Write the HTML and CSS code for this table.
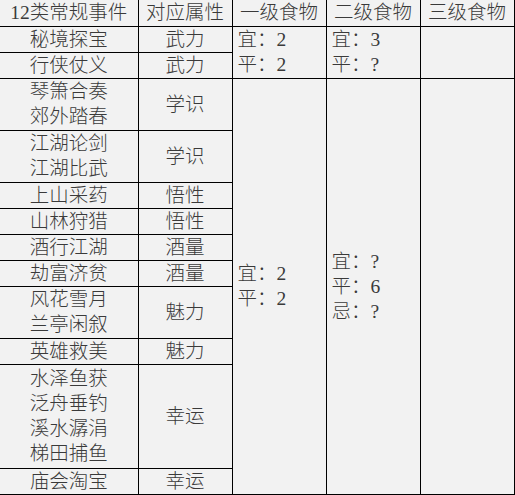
FILE: index.html
```html
<!DOCTYPE html>
<html lang="zh">
<head>
<meta charset="utf-8">
<link rel="stylesheet" href="styles.css">
</head>
<body>
<table class="grid">
  <colgroup>
    <col class="c-event">
    <col class="c-attr">
    <col class="c-food">
    <col class="c-food">
    <col class="c-food">
  </colgroup>
  <thead>
    <tr class="r1">
      <th>12类常规事件</th>
      <th>对应属性</th>
      <th>一级食物</th>
      <th>二级食物</th>
      <th>三级食物</th>
    </tr>
  </thead>
  <tbody>
    <tr class="r1">
      <td class="ctr">秘境探宝</td>
      <td class="ctr">武力</td>
      <td class="food" rowspan="2">宜：2<br>平：2</td>
      <td class="food" rowspan="2">宜：3<br>平：?</td>
      <td rowspan="2"></td>
    </tr>
    <tr class="r1">
      <td class="ctr">行侠仗义</td>
      <td class="ctr">武力</td>
    </tr>
    <tr class="r2">
      <td class="ctr">琴箫合奏<br>郊外踏春</td>
      <td class="ctr">学识</td>
      <td class="food" rowspan="11">宜：2<br>平：2</td>
      <td class="food" rowspan="11">宜：?<br>平：6<br>忌：?</td>
      <td rowspan="11"></td>
    </tr>
    <tr class="r2">
      <td class="ctr">江湖论剑<br>江湖比武</td>
      <td class="ctr">学识</td>
    </tr>
    <tr class="r1">
      <td class="ctr">上山采药</td>
      <td class="ctr">悟性</td>
    </tr>
    <tr class="r1">
      <td class="ctr">山林狩猎</td>
      <td class="ctr">悟性</td>
    </tr>
    <tr class="r1">
      <td class="ctr">酒行江湖</td>
      <td class="ctr">酒量</td>
    </tr>
    <tr class="r1">
      <td class="ctr">劫富济贫</td>
      <td class="ctr">酒量</td>
    </tr>
    <tr class="r2">
      <td class="ctr">风花雪月<br>兰亭闲叙</td>
      <td class="ctr">魅力</td>
    </tr>
    <tr class="r1">
      <td class="ctr">英雄救美</td>
      <td class="ctr">魅力</td>
    </tr>
    <tr class="r4">
      <td class="ctr">水泽鱼获<br>泛舟垂钓<br>溪水潺涓<br>梯田捕鱼</td>
      <td class="ctr">幸运</td>
    </tr>
    <tr class="r1">
      <td class="ctr">庙会淘宝</td>
      <td class="ctr">幸运</td>
    </tr>
  </tbody>
</table>
</body>
</html>
```

FILE: styles.css
```css
html, body {
  margin: 0;
  padding: 0;
  background: #f2f2f2;
}

.grid {
  border-collapse: collapse;
  table-layout: fixed;
  width: 514px;
  font-family: "Liberation Serif", "Noto Sans CJK SC", serif;
  font-size: 19.5px;
  font-weight: 300;
  color: #3a3a3a;
  line-height: 25px;
}

.c-event { width: 138px; }
.c-food { width: 94px; }
.c-attr { width: 94px; }

.grid th,
.grid td {
  border: 1px solid #000;
  padding: 0;
  vertical-align: middle;
  white-space: nowrap;
  overflow: hidden;
}

.grid th {
  font-weight: 300;
  text-align: center;
}

.grid tr > :first-child {
  border-left: none;
}

.grid thead th {
  border-top: none;
}

.r1 { height: 26px; }
.r2 { height: 52px; }
.r4 { height: 104px; }

.grid .ctr {
  text-align: center;
}

.grid .food {
  text-align: left;
  padding-left: 5px;
}
```
